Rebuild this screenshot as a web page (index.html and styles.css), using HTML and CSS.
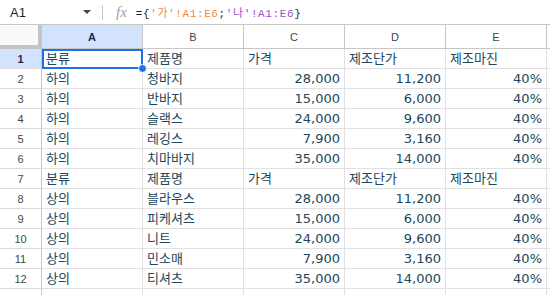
FILE: index.html
```html
<!DOCTYPE html>
<html lang="ko">
<head>
    <meta charset="UTF-8">
    <title>시트</title>
    <link rel="stylesheet" href="styles.css">
</head>
<body>
    <div class="formula-bar">
        <div class="name-box">
            <span>A1</span>
            <span class="caret"></span>
        </div>
        <div class="divider"></div>
        <span class="fx">fx</span>
        <span class="formula">={<span class="ref-1">'가'!A1:E6</span>;<span class="ref-2">'나'!A1:E6</span>}</span>
    </div>

    <div class="sheet">
        <div class="row">
            <div class="corner"></div>
            <div class="col-head active">A</div>
            <div class="col-head">B</div>
            <div class="col-head">C</div>
            <div class="col-head">D</div>
            <div class="col-head">E</div>
            <div class="col-head"></div>
        </div>
        <div class="row">
            <div class="row-head active">1</div>
            <div class="cell selected">분류<span class="sel-box"></span><span class="handle"></span></div>
            <div class="cell">제품명</div>
            <div class="cell">가격</div>
            <div class="cell">제조단가</div>
            <div class="cell">제조마진</div>
            <div class="cell"></div>
        </div>
        <div class="row">
            <div class="row-head">2</div>
            <div class="cell">하의</div>
            <div class="cell">청바지</div>
            <div class="cell num">28,000</div>
            <div class="cell num">11,200</div>
            <div class="cell num">40%</div>
            <div class="cell"></div>
        </div>
        <div class="row">
            <div class="row-head">3</div>
            <div class="cell">하의</div>
            <div class="cell">반바지</div>
            <div class="cell num">15,000</div>
            <div class="cell num">6,000</div>
            <div class="cell num">40%</div>
            <div class="cell"></div>
        </div>
        <div class="row">
            <div class="row-head">4</div>
            <div class="cell">하의</div>
            <div class="cell">슬랙스</div>
            <div class="cell num">24,000</div>
            <div class="cell num">9,600</div>
            <div class="cell num">40%</div>
            <div class="cell"></div>
        </div>
        <div class="row">
            <div class="row-head">5</div>
            <div class="cell">하의</div>
            <div class="cell">레깅스</div>
            <div class="cell num">7,900</div>
            <div class="cell num">3,160</div>
            <div class="cell num">40%</div>
            <div class="cell"></div>
        </div>
        <div class="row">
            <div class="row-head">6</div>
            <div class="cell">하의</div>
            <div class="cell">치마바지</div>
            <div class="cell num">35,000</div>
            <div class="cell num">14,000</div>
            <div class="cell num">40%</div>
            <div class="cell"></div>
        </div>
        <div class="row">
            <div class="row-head">7</div>
            <div class="cell">분류</div>
            <div class="cell">제품명</div>
            <div class="cell">가격</div>
            <div class="cell">제조단가</div>
            <div class="cell">제조마진</div>
            <div class="cell"></div>
        </div>
        <div class="row">
            <div class="row-head">8</div>
            <div class="cell">상의</div>
            <div class="cell">블라우스</div>
            <div class="cell num">28,000</div>
            <div class="cell num">11,200</div>
            <div class="cell num">40%</div>
            <div class="cell"></div>
        </div>
        <div class="row">
            <div class="row-head">9</div>
            <div class="cell">상의</div>
            <div class="cell">피케셔츠</div>
            <div class="cell num">15,000</div>
            <div class="cell num">6,000</div>
            <div class="cell num">40%</div>
            <div class="cell"></div>
        </div>
        <div class="row">
            <div class="row-head">10</div>
            <div class="cell">상의</div>
            <div class="cell">니트</div>
            <div class="cell num">24,000</div>
            <div class="cell num">9,600</div>
            <div class="cell num">40%</div>
            <div class="cell"></div>
        </div>
        <div class="row">
            <div class="row-head">11</div>
            <div class="cell">상의</div>
            <div class="cell">민소매</div>
            <div class="cell num">7,900</div>
            <div class="cell num">3,160</div>
            <div class="cell num">40%</div>
            <div class="cell"></div>
        </div>
        <div class="row">
            <div class="row-head">12</div>
            <div class="cell">상의</div>
            <div class="cell">티셔츠</div>
            <div class="cell num">35,000</div>
            <div class="cell num">14,000</div>
            <div class="cell num">40%</div>
            <div class="cell"></div>
        </div>
        <!-- row 13 is cut off by the window -->
        <div class="row">
            <div class="row-head"></div>
            <div class="cell"></div>
            <div class="cell"></div>
            <div class="cell"></div>
            <div class="cell"></div>
            <div class="cell"></div>
            <div class="cell"></div>
        </div>
    </div>
</body>
</html>
```

FILE: styles.css
```css
body {
    margin: 0;
    background: #ffffff;
    overflow: hidden;
    font-family: "Liberation Sans", Arial, sans-serif;
}

/* formula bar */
.formula-bar {
    height: 24px;
    border-bottom: 1px solid #c7c7c7;
    display: flex;
    align-items: center;
}
.name-box {
    width: 91px;
    padding-left: 10px;
    display: flex;
    align-items: center;
    justify-content: space-between;
    font-size: 13px;
    color: #1f1f1f;
    box-sizing: border-box;
}
.caret {
    width: 0;
    height: 0;
    border-left: 4px solid transparent;
    border-right: 4px solid transparent;
    border-top: 4px solid #444746;
}
.divider {
    width: 1px;
    height: 15px;
    background: #c7c7c7;
    margin-left: 11px;
}
.fx {
    margin-left: 13px;
    font-family: "Liberation Serif", serif;
    font-style: italic;
    font-size: 15px;
    color: #9aa0a6;
}
.formula {
    margin-left: 9px;
    font-family: "Liberation Mono", "Noto Sans CJK KR", monospace;
    font-size: 11px;
    letter-spacing: 0.6px;
    color: #1f1f1f;
}
.ref-1 {
    color: #f08a3a;
}
.ref-2 {
    color: #9a4fc6;
}

/* grid */
.sheet {
    display: grid;
    grid-template-columns: 42px repeat(5, 101px) 1fr;
    grid-template-rows: 24px;
    grid-auto-rows: 20px;
}
.row {
    display: contents;
}
.corner,
.col-head,
.row-head,
.cell {
    box-sizing: border-box;
    border-right: 1px solid #e1e1e1;
    border-bottom: 1px solid #e1e1e1;
}
.corner {
    background: #f8f9fa;
    border-right: 4px solid #c4c4c4;
    border-bottom: 4px solid #c4c4c4;
}
.col-head {
    display: flex;
    align-items: center;
    justify-content: center;
    font-size: 11px;
    color: #444746;
    border-right-color: #c7c7c7;
    border-bottom-color: #c7c7c7;
}
.row-head {
    display: flex;
    align-items: center;
    justify-content: center;
    font-size: 11px;
    color: #444746;
    border-right-color: #c7c7c7;
    border-bottom-color: #dadada;
}
.col-head.active,
.row-head.active {
    background: #d3e3fd;
    font-weight: bold;
    color: #1f2d44;
}
.cell {
    position: relative;
    padding: 0 4px;
    font-family: "DejaVu Sans", "Noto Sans CJK KR", sans-serif;
    font-size: 13px;
    line-height: 19px;
    color: #21475a;
    white-space: nowrap;
}
.cell.num {
    text-align: right;
}
.sel-box {
    position: absolute;
    top: 0;
    left: 0;
    right: -1px;
    bottom: -1px;
    border: 2px solid #1a73e8;
}
.handle {
    position: absolute;
    right: -5px;
    bottom: -5px;
    width: 7px;
    height: 7px;
    border-radius: 50%;
    background: #1a73e8;
    border: 1px solid #ffffff;
    z-index: 1;
}
```
